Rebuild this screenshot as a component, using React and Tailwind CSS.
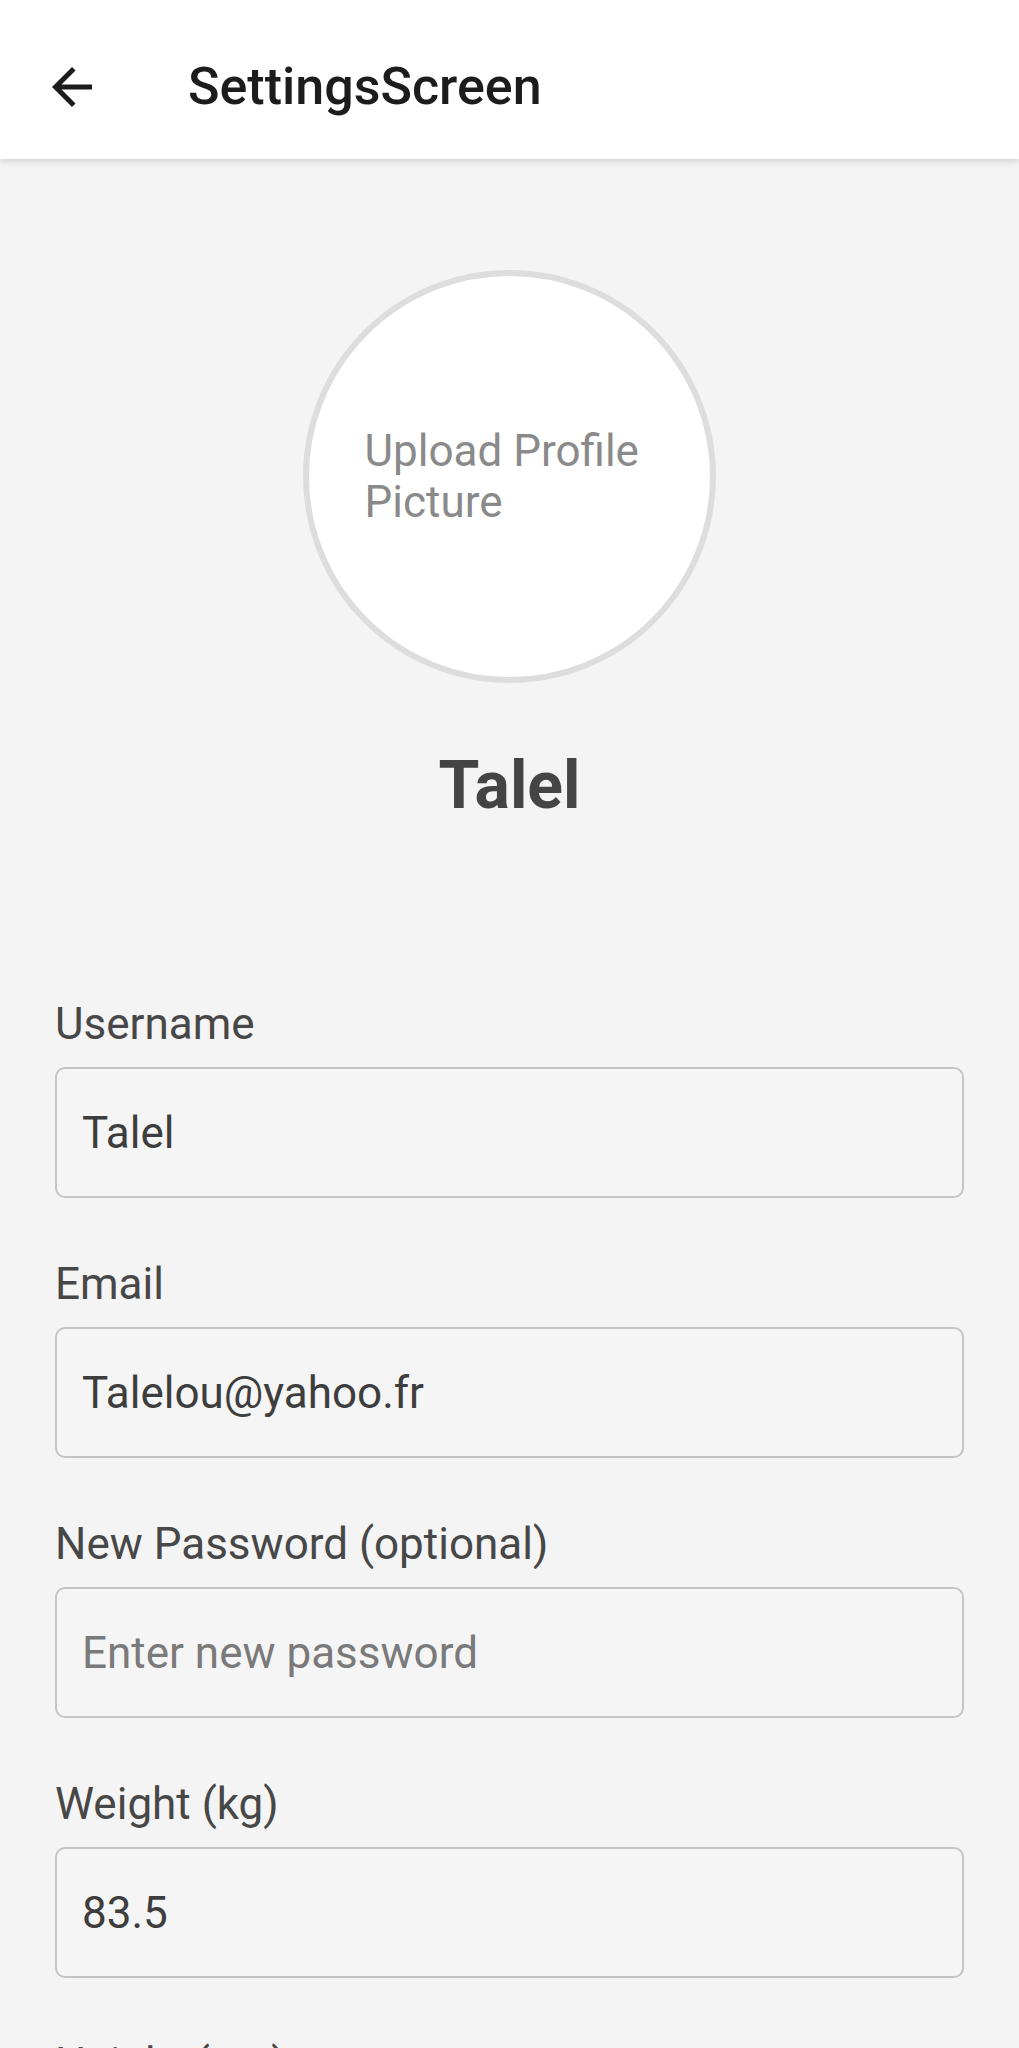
import { useState } from "react";

const Field = ({ label, value, placeholder, onChange, type = "text" }) => (
  <div className="flex flex-col">
    <label className="text-[44px] leading-[53px] text-[#474747]">{label}</label>
    <input
      type={type}
      value={value}
      placeholder={placeholder}
      onChange={onChange}
      className="mt-[16px] h-[131px] w-full rounded-[10px] border-2 border-[#c4c4c4] bg-[#f5f5f5] pl-[25px] text-[44px] text-[#3d3d3d] outline-none placeholder:text-[#7a7a7a]"
    />
  </div>
);

const App = () => {
  const [form, setForm] = useState({
    username: "Talel",
    email: "Talelou@yahoo.fr",
    password: "",
    weight: "83.5",
    height: "",
  });

  const set = (name) => (e) => setForm({ ...form, [name]: e.target.value });

  return (
    <div className="min-h-screen bg-[#f4f4f4] font-['Roboto',sans-serif]">
      <div className="relative z-10 flex h-[159px] items-center bg-white pt-[15px] shadow-[0_3px_6px_rgba(0,0,0,0.12)]">
        <button className="ml-[42px] flex h-[60px] w-[60px] items-center justify-center">
          <svg viewBox="0 0 24 24" className="h-[60px] w-[60px]" fill="#1c1c1c">
            <path d="M20 11H7.83l5.59-5.59L12 4l-8 8 8 8 1.41-1.41L7.83 13H20v-2z" />
          </svg>
        </button>
        <h1 className="ml-[86px] text-[52px] font-medium text-[#1c1c1c]">SettingsScreen</h1>
      </div>

      <div className="flex flex-col items-center">
        <div className="mt-[111px] flex h-[413px] w-[413px] items-center justify-center rounded-full border-[6px] border-[#dddddd] bg-white">
          <p className="w-[290px] text-left text-[44px] leading-[51px] text-[#8a8a8a]">
            Upload Profile Picture
          </p>
        </div>
        <h2 className="mt-[64px] text-[66px] font-bold leading-[78px] text-[#444444]">Talel</h2>
      </div>

      <div className="mt-[173px] flex flex-col gap-[60px] px-[55px] pb-[60px]">
        <Field label="Username" value={form.username} onChange={set("username")} />
        <Field label="Email" value={form.email} onChange={set("email")} />
        <Field
          label="New Password (optional)"
          type="password"
          value={form.password}
          placeholder="Enter new password"
          onChange={set("password")}
        />
        <Field label="Weight (kg)" value={form.weight} onChange={set("weight")} />
        <Field label="Height (cm)" value={form.height} onChange={set("height")} />
      </div>
    </div>
  );
};

export default App;
